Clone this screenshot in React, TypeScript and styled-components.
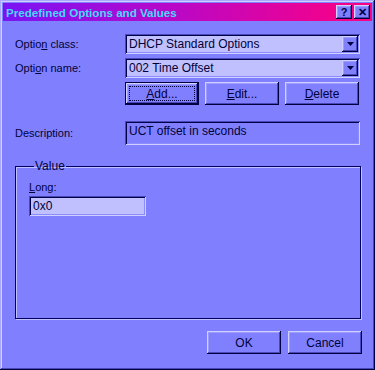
import React from 'react'
import styled, { createGlobalStyle } from 'styled-components'

const GlobalStyle = createGlobalStyle`
    html, body {
        margin: 0;
        padding: 0;
        background: #8080ff;
    }
    * {
        box-sizing: border-box;
    }
`

const raised = `
    box-shadow: inset -1px -1px #000040, inset 1px 1px #d0d0ff,
        inset -2px -2px #4848b8, inset 2px 2px #9c9cff;
`
const sunken = `
    box-shadow: inset 1px 1px #4848b8, inset -1px -1px #d0d0ff,
        inset 2px 2px #000048, inset -2px -2px #8c8cff;
`

const Window = styled.div`
    width: 375px;
    height: 370px;
    padding: 3px;
    background: #8080ff;
    font-family: 'Liberation Sans', Arial, sans-serif;
    font-size: 11px;
    color: #000038;
    display: flex;
    flex-direction: column;
    box-shadow: inset -1px -1px #000040, inset 1px 1px #a8a8ff,
        inset -2px -2px #4848b8, inset 2px 2px #d0d0ff;
`

const TitleBar = styled.div`
    height: 18px;
    flex: none;
    display: flex;
    align-items: center;
    justify-content: space-between;
    padding: 0 2px 0 3px;
    background: linear-gradient(to right, #7a14f4, #b808c8 45%, #ff0080);
`

const Title = styled.span`
    font-weight: bold;
    font-size: 11.6px;
    color: #48d8ff;
`

const TitleButtons = styled.div`
    display: flex;
    gap: 2px;
`

const CaptionButton = styled.div`
    width: 16px;
    height: 14px;
    background: #8080ff;
    ${raised}
    display: flex;
    align-items: center;
    justify-content: center;
    font-weight: bold;
    font-size: 11px;
    color: #000040;
`

const Body = styled.div`
    flex: 1;
    display: flex;
    flex-direction: column;
    padding: 13px 11px 0 12px;
`

const Row = styled.div<{ $mt?: number }>`
    display: grid;
    grid-template-columns: 110px 235px;
    align-items: center;
    margin-top: ${({ $mt }) => $mt ?? 0}px;
`

const Label = styled.span`
    white-space: nowrap;
`

const Combo = styled.div`
    height: 20px;
    background: #c0c0ff;
    ${sunken}
    display: flex;
    align-items: center;
    padding: 2px 2px 2px 4px;
`

const ComboText = styled.span`
    flex: 1;
    font-size: 12px;
`

const ComboButton = styled.div`
    width: 16px;
    height: 16px;
    background: #8080ff;
    ${raised}
    display: flex;
    align-items: center;
    justify-content: center;
`

const ButtonRow = styled.div`
    display: flex;
    gap: 6px;
`

const Button = styled.div<{ $default?: boolean }>`
    width: 74px;
    height: 23px;
    display: flex;
    align-items: center;
    justify-content: center;
    background: #8080ff;
    font-size: 12px;
    position: relative;
    ${raised}
    ${({ $default }) =>
        $default &&
        `
        border: 1px solid #000040;
        &::after {
            content: '';
            position: absolute;
            inset: 3px;
            border: 1px dotted #000040;
        }
    `}
`

const Field = styled.div<{ $fill?: string; $h: number }>`
    height: ${({ $h }) => $h}px;
    background: ${({ $fill }) => $fill ?? '#8080ff'};
    ${sunken}
    display: flex;
    align-items: ${({ $h }) => ($h > 21 ? 'flex-start' : 'center')};
    padding: ${({ $h }) => ($h > 21 ? '3px 4px' : '0 4px')};
    font-size: 12px;
`

const Group = styled.fieldset`
    margin: 14px 0 0 0;
    padding: 8px 14px 0 13px;
    height: 160px;
    border: 1px solid #000060;
    box-shadow: 1px 1px #c0c0ff, inset 1px 1px #c0c0ff;
    display: flex;
    flex-direction: column;
`

const Legend = styled.legend`
    padding: 0 1px;
    margin-left: 5px;
    font-size: 12px;
`

const LongField = styled(Field)`
    width: 117px;
    margin-top: 3px;
`

const Footer = styled.div`
    display: flex;
    justify-content: flex-end;
    gap: 7px;
    margin-top: 12px;
    margin-right: -1px;
`

const Arrow = () => (
    <svg width="7" height="4" viewBox="0 0 7 4">
        <path d="M0 0h7L3.5 4z" fill="#000040" />
    </svg>
)

export default function App() {
    return (
        <>
            <GlobalStyle />
            <Window>
                <TitleBar>
                    <Title>Predefined Options and Values</Title>
                    <TitleButtons>
                        <CaptionButton>?</CaptionButton>
                        <CaptionButton>✕</CaptionButton>
                    </TitleButtons>
                </TitleBar>
                <Body>
                    <Row>
                        <Label>
                            Optio<u>n</u> class:
                        </Label>
                        <Combo>
                            <ComboText>DHCP Standard Options</ComboText>
                            <ComboButton>
                                <Arrow />
                            </ComboButton>
                        </Combo>
                    </Row>
                    <Row $mt={4}>
                        <Label>
                            Opti<u>o</u>n name:
                        </Label>
                        <Combo>
                            <ComboText>002 Time Offset</ComboText>
                            <ComboButton>
                                <Arrow />
                            </ComboButton>
                        </Combo>
                    </Row>
                    <Row $mt={4}>
                        <span />
                        <ButtonRow>
                            <Button $default>
                                <span>
                                    <u>A</u>dd...
                                </span>
                            </Button>
                            <Button>
                                <span>
                                    <u>E</u>dit...
                                </span>
                            </Button>
                            <Button>
                                <span>
                                    <u>D</u>elete
                                </span>
                            </Button>
                        </ButtonRow>
                    </Row>
                    <Row $mt={16}>
                        <Label>Description:</Label>
                        <Field $h={24}>UCT offset in seconds</Field>
                    </Row>
                    <Group>
                        <Legend>Value</Legend>
                        <Label>
                            <u>L</u>ong:
                        </Label>
                        <LongField $h={20} $fill="#c0c0ff">
                            0x0
                        </LongField>
                    </Group>
                    <Footer>
                        <Button>OK</Button>
                        <Button>Cancel</Button>
                    </Footer>
                </Body>
            </Window>
        </>
    )
}
